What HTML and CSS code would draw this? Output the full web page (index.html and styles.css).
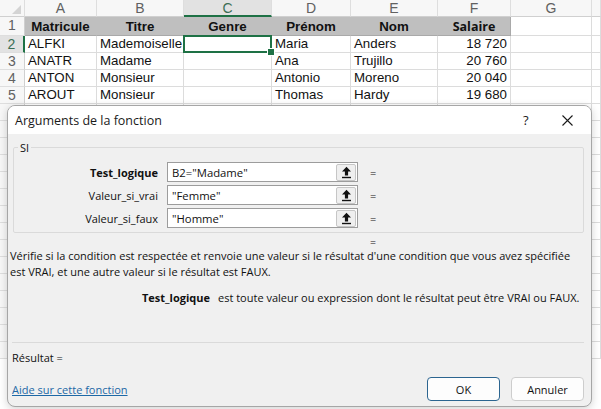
FILE: index.html
```html
<!DOCTYPE html>
<html lang="fr">
<head>
<meta charset="utf-8">
<title>Arguments de la fonction</title>
<link rel="stylesheet" href="styles.css">
</head>
<body>
<div class="sheet">
  <div class="grid">
    <div class="ch corner"><span class="tri"></span></div>
    <div class="ch">A</div><div class="ch">B</div><div class="ch sel">C</div><div class="ch">D</div><div class="ch">E</div><div class="ch">F</div><div class="ch">G</div><div class="ch last"></div>

    <div class="rh">1</div>
    <div class="c hd">Matricule</div><div class="c hd">Titre</div><div class="c hd">Genre</div><div class="c hd">Prénom</div><div class="c hd">Nom</div><div class="c hd sal">Salaire</div><div class="c"></div><div class="c last"></div>

    <div class="rh rsel">2</div>
    <div class="c">ALFKI</div><div class="c">Mademoiselle</div><div class="c active"></div><div class="c">Maria</div><div class="c">Anders</div><div class="c num">18 720</div><div class="c"></div><div class="c last"></div>

    <div class="rh">3</div>
    <div class="c">ANATR</div><div class="c">Madame</div><div class="c"></div><div class="c">Ana</div><div class="c">Trujillo</div><div class="c num">20 760</div><div class="c"></div><div class="c last"></div>

    <div class="rh">4</div>
    <div class="c">ANTON</div><div class="c">Monsieur</div><div class="c"></div><div class="c">Antonio</div><div class="c">Moreno</div><div class="c num">20 040</div><div class="c"></div><div class="c last"></div>

    <div class="rh">5</div>
    <div class="c">AROUT</div><div class="c">Monsieur</div><div class="c"></div><div class="c">Thomas</div><div class="c">Hardy</div><div class="c num">19 680</div><div class="c"></div><div class="c last"></div>

    <div class="rh"></div><div class="c"></div><div class="c"></div><div class="c"></div><div class="c"></div><div class="c"></div><div class="c"></div><div class="c"></div><div class="c last"></div>
    <div class="rh"></div><div class="c"></div><div class="c"></div><div class="c"></div><div class="c"></div><div class="c"></div><div class="c"></div><div class="c"></div><div class="c last"></div>
    <div class="rh"></div><div class="c"></div><div class="c"></div><div class="c"></div><div class="c"></div><div class="c"></div><div class="c"></div><div class="c"></div><div class="c last"></div>
    <div class="rh"></div><div class="c"></div><div class="c"></div><div class="c"></div><div class="c"></div><div class="c"></div><div class="c"></div><div class="c"></div><div class="c last"></div>
    <div class="rh"></div><div class="c"></div><div class="c"></div><div class="c"></div><div class="c"></div><div class="c"></div><div class="c"></div><div class="c"></div><div class="c last"></div>
    <div class="rh"></div><div class="c"></div><div class="c"></div><div class="c"></div><div class="c"></div><div class="c"></div><div class="c"></div><div class="c"></div><div class="c last"></div>
    <div class="rh"></div><div class="c"></div><div class="c"></div><div class="c"></div><div class="c"></div><div class="c"></div><div class="c"></div><div class="c"></div><div class="c last"></div>
    <div class="rh"></div><div class="c"></div><div class="c"></div><div class="c"></div><div class="c"></div><div class="c"></div><div class="c"></div><div class="c"></div><div class="c last"></div>
    <div class="rh"></div><div class="c"></div><div class="c"></div><div class="c"></div><div class="c"></div><div class="c"></div><div class="c"></div><div class="c"></div><div class="c last"></div>
    <div class="rh"></div><div class="c"></div><div class="c"></div><div class="c"></div><div class="c"></div><div class="c"></div><div class="c"></div><div class="c"></div><div class="c last"></div>
    <div class="rh"></div><div class="c"></div><div class="c"></div><div class="c"></div><div class="c"></div><div class="c"></div><div class="c"></div><div class="c"></div><div class="c last"></div>
    <div class="rh"></div><div class="c"></div><div class="c"></div><div class="c"></div><div class="c"></div><div class="c"></div><div class="c"></div><div class="c"></div><div class="c last"></div>
    <div class="rh"></div><div class="c"></div><div class="c"></div><div class="c"></div><div class="c"></div><div class="c"></div><div class="c"></div><div class="c"></div><div class="c last"></div>
    <div class="rh"></div><div class="c"></div><div class="c"></div><div class="c"></div><div class="c"></div><div class="c"></div><div class="c"></div><div class="c"></div><div class="c last"></div>
    <div class="rh"></div><div class="c"></div><div class="c"></div><div class="c"></div><div class="c"></div><div class="c"></div><div class="c"></div><div class="c"></div><div class="c last"></div>
  </div>
</div>

<div class="dialog">
  <div class="titlebar">
    <span class="title">Arguments de la fonction</span>
    <span class="help">?</span>
    <span class="close">
      <svg width="11" height="11" viewBox="0 0 11 11"><path d="M0.5 0.5 L10.5 10.5 M10.5 0.5 L0.5 10.5" stroke="#1a1a1a" stroke-width="1.1" fill="none"/></svg>
    </span>
  </div>
  <div class="dbody">
    <fieldset class="group">
      <legend>SI</legend>
      <div class="args">
        <div class="arg">
          <label class="lbl strong">Test_logique</label>
          <div class="inp"><span class="val">B2="Madame"</span><span class="ref"><svg width="11" height="13" viewBox="0 0 11 13"><path d="M5.5 0.8 L10 5.6 L7.1 5.6 L7.1 9.4 L3.9 9.4 L3.9 5.6 L1 5.6 Z" fill="#111"/><rect x="1" y="10.8" width="9" height="1.4" fill="#111"/></svg></span></div>
          <span class="eq">=</span>
        </div>
        <div class="arg">
          <label class="lbl">Valeur_si_vrai</label>
          <div class="inp"><span class="val">"Femme"</span><span class="ref"><svg width="11" height="13" viewBox="0 0 11 13"><path d="M5.5 0.8 L10 5.6 L7.1 5.6 L7.1 9.4 L3.9 9.4 L3.9 5.6 L1 5.6 Z" fill="#111"/><rect x="1" y="10.8" width="9" height="1.4" fill="#111"/></svg></span></div>
          <span class="eq">=</span>
        </div>
        <div class="arg">
          <label class="lbl">Valeur_si_faux</label>
          <div class="inp"><span class="val">"Homme"</span><span class="ref"><svg width="11" height="13" viewBox="0 0 11 13"><path d="M5.5 0.8 L10 5.6 L7.1 5.6 L7.1 9.4 L3.9 9.4 L3.9 5.6 L1 5.6 Z" fill="#111"/><rect x="1" y="10.8" width="9" height="1.4" fill="#111"/></svg></span></div>
          <span class="eq">=</span>
        </div>
      </div>
    </fieldset>
    <div class="result-eq">=</div>
    <div class="desc">
      <div class="dline">Vérifie si la condition est respectée et renvoie une valeur si le résultat d'une condition que vous avez spécifiée</div>
      <div class="dline">est VRAI, et une autre valeur si le résultat est FAUX.</div>
    </div>
    <div class="argdesc"><span class="adname">Test_logique</span><span class="adtext">est toute valeur ou expression dont le résultat peut être VRAI ou FAUX.</span></div>
    <div class="sep"></div>
    <div class="result">Résultat =</div>
    <div class="footer">
      <a class="help-link" href="#">Aide sur cette fonction</a>
      <div class="buttons">
        <button class="btn ok">OK</button>
        <button class="btn">Annuler</button>
      </div>
    </div>
  </div>
</div>
</body>
</html>
```
FILE: styles.css
```css
* { box-sizing: border-box; }
html, body { margin: 0; padding: 0; }
body {
  width: 601px;
  height: 409px;
  overflow: hidden;
  position: relative;
  background: #ffffff;
  font-family: "Liberation Sans", Arial, sans-serif;
}

/* ---------- spreadsheet ---------- */
.grid {
  display: grid;
  grid-template-columns: 25px 72px 87px 88px 79px 87px 73px 81px 9px;
  grid-template-rows: 17px 19px repeat(19, 17px);
  width: 601px;
  overflow: hidden;
}
.ch {
  background: #f7f7f7;
  color: #616161;
  font-size: 14px;
  text-align: center;
  line-height: 16px;
  border-right: 1px solid #dedede;
  border-bottom: 1px solid #d0d0d0;
}
.ch.sel {
  background: #e2e2e2;
  border-bottom: 2px solid #1e7145;
  color: #3b6e55;
}
.corner { position: relative; }
.tri {
  position: absolute;
  right: 3px;
  bottom: 2px;
  width: 0; height: 0;
  border-left: 9px solid transparent;
  border-bottom: 9px solid #d4d4d4;
}
.rh {
  background: #f7f7f7;
  color: #616161;
  font-size: 14px;
  text-align: center;
  line-height: 17px;
  border-right: 1px solid #d0d0d0;
  border-bottom: 1px solid #dedede;
}
.rsel {
  background: #e2e2e2;
  color: #3b6e55;
  border-right: 2px solid #1e7145;
}
.c {
  font-size: 13.3px;
  color: #111;
  line-height: 16px;
  padding: 0 3px;
  white-space: nowrap;
  overflow: visible;
  border-right: 1px solid #dcdcdc;
  border-bottom: 1px solid #dcdcdc;
}
.c.hd {
  background: #bfbfbf;
  font-weight: bold;
  text-align: center;
  line-height: 19px;
  border-right-color: #bfbfbf;
  border-bottom-color: #a9a9a9;
}
.c.hd.sal {
  font-family: "Open Sans", "Noto Sans", sans-serif;
  font-size: 12.5px;
  border-right-color: #a9a9a9;
}
.c.num { text-align: right; }
.c.active { position: relative; }
.c.active::after {
  content: "";
  position: absolute;
  left: -1px; top: -1px; right: -1px; bottom: -1px;
  border: 2px solid #1e7145;
}
.c.active::before {
  content: "";
  position: absolute;
  right: -4px; bottom: -4px;
  width: 6px; height: 6px;
  background: #1e7145;
  border: 1px solid #fff;
  z-index: 2;
}

/* ---------- dialog ---------- */
.dialog {
  position: absolute;
  left: 7px;
  top: 105px;
  width: 585px;
  height: 302px;
  border: 1px solid #a6a6a6;
  border-radius: 8px;
  background: #f0f0f0;
  box-shadow: 0 2px 8px rgba(0,0,0,0.18);
  overflow: hidden;
  font-family: "Open Sans", "Noto Sans", sans-serif;
  font-size: 11px;
  color: #111;
  display: flex;
  flex-direction: column;
}
.titlebar {
  height: 28px;
  background: #ffffff;
  display: flex;
  align-items: center;
  padding-left: 7px;
  flex: none;
}
.title { font-size: 12.5px; flex: 1; color: #1a1a1a; }
.help { font-size: 13px; width: 14px; margin-right: 25px; color: #1a1a1a; }
.close { width: 11px; height: 11px; margin-right: 18px; display: flex; }

.dbody {
  flex: 1;
  padding: 6px 7px 0 2px;
  display: flex;
  flex-direction: column;
}
.group {
  margin: 0 0 0 3px;
  padding: 7px 0 4px 0;
  border: 1px solid #dadada;
  border-radius: 2px;
  min-width: 0;
}
.group legend {
  margin-left: 4px;
  padding: 0 2px;
  font-size: 11px;
  line-height: 15px;
}
.args { display: flex; flex-direction: column; gap: 3px; }
.arg {
  display: grid;
  grid-template-columns: 144px 191px auto;
  column-gap: 9px;
  align-items: center;
  height: 20px;
}
.lbl { text-align: right; font-size: 11px; }
.lbl.strong { font-weight: bold; }
.inp {
  height: 20px;
  background: #fff;
  border: 1px solid #9c9c9c;
  display: flex;
  align-items: center;
  justify-content: space-between;
  padding: 0 1px 0 4px;
}
.val { font-size: 11.3px; }
.ref {
  width: 20px;
  height: 17px;
  background: #efefef;
  border: 1px solid #c6c6c6;
  border-radius: 2px;
  display: flex;
  align-items: center;
  justify-content: center;
}
.eq { padding-left: 3px; }

.result-eq {
  align-self: flex-start;
  margin: 4px 0 0 360px;
  font-size: 10.5px;
  line-height: 10px;
  height: 10px;
}
.desc {
  margin-top: 1px;
  display: flex;
  flex-direction: column;
  white-space: nowrap;
}
.dline { line-height: 15.5px; }
.argdesc {
  margin-top: 11px;
  line-height: 15px;
  display: grid;
  grid-template-columns: 200px auto;
  column-gap: 8px;
}
.adname { font-weight: bold; text-align: right; }
.sep {
  height: 1px;
  background: #dadada;
  margin: 37px 0 0 2px;
}
.result {
  margin-top: 7px;
  padding-left: 2px;
  line-height: 15px;
}
.footer {
  margin-top: 12px;
  display: flex;
  align-items: center;
  justify-content: space-between;
  padding-left: 2px;
}
.help-link { color: #1d68a6; text-decoration: underline; font-size: 11px; }
.buttons { display: flex; gap: 11px; }
.btn {
  width: 73px;
  height: 24px;
  font-family: "Open Sans", "Noto Sans", sans-serif;
  font-size: 11px;
  color: #111;
  background: #fdfdfd;
  border: 1px solid #cdcdcd;
  border-radius: 4px;
  padding: 0;
}
.btn.ok { border-color: #2c6590; }
```
